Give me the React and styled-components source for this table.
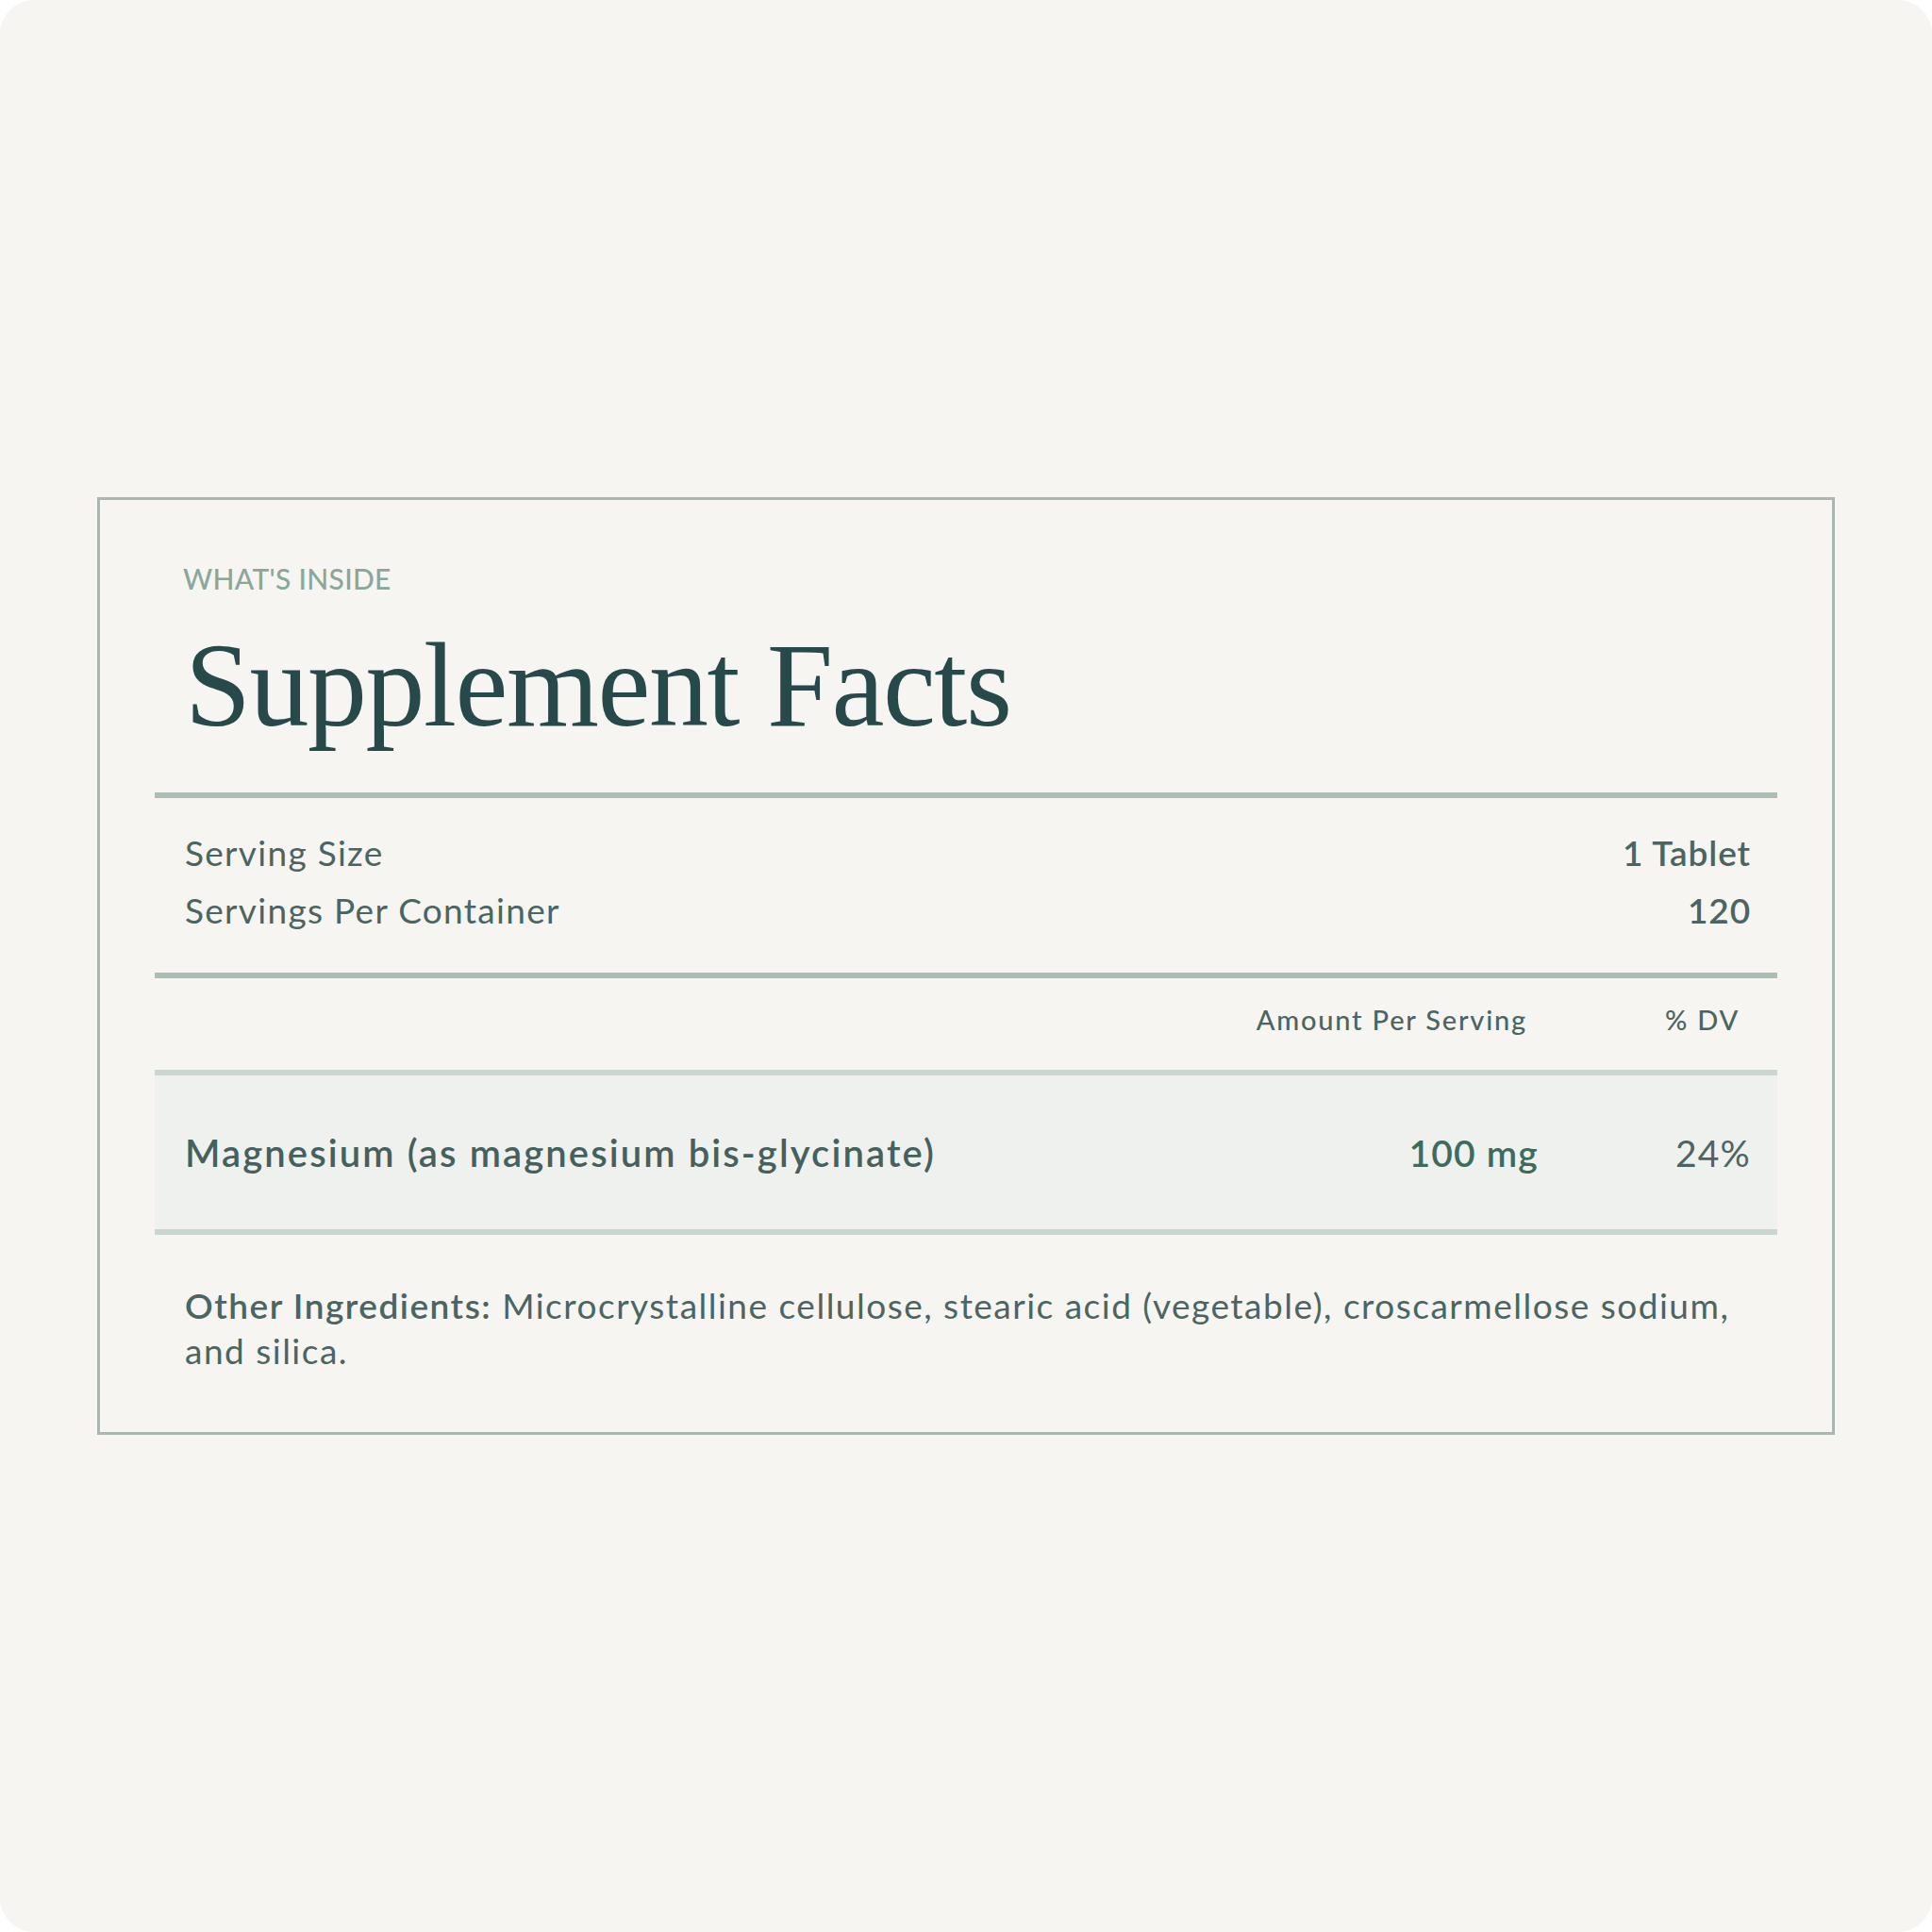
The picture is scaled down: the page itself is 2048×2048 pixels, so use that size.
import React from 'react'
import styled, { createGlobalStyle } from 'styled-components'

const GlobalStyle = createGlobalStyle`
	body {
		margin: 0;
		background: #ffffff;
	}
	* {
		box-sizing: border-box;
	}
`

const Page = styled.div`
	width: 2048px;
	height: 2048px;
	background: #f6f5f2;
	border-radius: 36px;
	display: flex;
	align-items: center;
	justify-content: center;
	padding: 0 103px;
	font-family: 'Lato', 'Noto Sans', sans-serif;
	color: #4b6562;
`

const Card = styled.section`
	width: 100%;
	border: 3px solid #a9b6b1;
	padding: 65px 58px 62px;
`

const Eyebrow = styled.div`
	padding: 0 30px;
	font-size: 30px;
	line-height: 36px;
	font-weight: 500;
	color: #8aa89a;
	letter-spacing: 0.3px;
	text-transform: uppercase;
`

const Title = styled.h1`
	margin: 27px 0 44px;
	padding: 0 32px;
	font-family: 'Liberation Serif', 'DejaVu Serif', serif;
	font-weight: 400;
	font-size: 126px;
	line-height: 1.1;
	letter-spacing: -1.5px;
	color: #27494a;
`

const Rule = styled.div`
	height: 6px;
	background: ${(p) => (p.$light ? '#ccd6d1' : '#adbdb6')};
`

const Servings = styled.div`
	padding: 27px 28px 36px 32px;
	display: flex;
	flex-direction: column;
`

const ServingLine = styled.div`
	display: flex;
	justify-content: space-between;
	font-size: 37px;
	line-height: 61px;
	letter-spacing: 1.3px;

	strong {
		font-weight: 600;
		letter-spacing: 0.9px;
	}
`

const TableRow = styled.div`
	display: grid;
	grid-template-columns: 1fr auto 225px;
	align-items: center;
	padding: ${(p) => (p.$head ? '24px 28px 34px 32px' : '0 28px 0 32px')};
	height: ${(p) => (p.$head ? '97px' : '163px')};
	background: ${(p) => (p.$head ? 'transparent' : '#eff1ee')};
`

const HeadCell = styled.div`
	font-size: 29px;
	font-weight: 500;
	letter-spacing: 1.8px;
	text-align: right;
	padding-right: 12px;
`

const Nutrient = styled.div`
	font-size: 40px;
	font-weight: 600;
	letter-spacing: 2.1px;
	color: #45605d;
`

const Amount = styled.div`
	font-size: 39px;
	font-weight: 600;
	letter-spacing: 1.2px;
	color: #3d6b5d;
	text-align: right;
`

const Percent = styled.div`
	font-size: 39px;
	font-weight: 400;
	letter-spacing: 1.2px;
	text-align: right;
`

const Ingredients = styled.p`
	margin: 51px 0 0;
	padding: 0 28px 0 32px;
	font-size: 37px;
	line-height: 48px;
	letter-spacing: 1.5px;

	b {
		font-weight: 600;
	}
`

const App = () => {
	return (
		<Page>
			<GlobalStyle />
			<Card>
				<Eyebrow>What's Inside</Eyebrow>
				<Title>Supplement Facts</Title>
				<Rule />
				<Servings>
					<ServingLine>
						<span>Serving Size</span>
						<strong>1 Tablet</strong>
					</ServingLine>
					<ServingLine>
						<span>Servings Per Container</span>
						<strong>120</strong>
					</ServingLine>
				</Servings>
				<Rule />
				<TableRow $head>
					<span />
					<HeadCell>Amount Per Serving</HeadCell>
					<HeadCell>% DV</HeadCell>
				</TableRow>
				<Rule $light />
				<TableRow>
					<Nutrient>Magnesium (as magnesium bis-glycinate)</Nutrient>
					<Amount>100 mg</Amount>
					<Percent>24%</Percent>
				</TableRow>
				<Rule $light />
				<Ingredients>
					<b>Other Ingredients:</b> Microcrystalline cellulose, stearic acid (vegetable), croscarmellose
					sodium, and silica.
				</Ingredients>
			</Card>
		</Page>
	)
}

export default App
